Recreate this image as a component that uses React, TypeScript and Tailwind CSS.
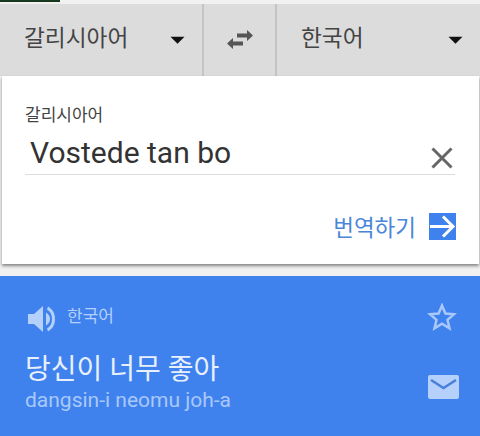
const font = { fontFamily: '"Roboto", "Noto Sans CJK KR", sans-serif' };

function Caret() {
  return (
    <svg width="15" height="8" viewBox="0 0 16 8" className="shrink-0">
      <path d="M0.5 0.5h15L8 8z" fill="#111" />
    </svg>
  );
}

function LangButton({ label, className }: { label: string; className: string }) {
  return (
    <div className={`flex items-center justify-between ${className}`}>
      <span className="text-[22.700px] leading-none text-[#444] -mt-[2px]">{label}</span>
      <Caret />
    </div>
  );
}

export default function App() {
  return (
    <div className="w-[480px] h-[436px] overflow-hidden bg-[#f1f1f1] flex flex-col relative" style={font}>
      <div className="absolute left-0 top-0 w-[60px] h-[2px] bg-[#17381f]" />
      <div className="h-[72px] mt-[4px] flex bg-[#dcdcdc] shrink-0">
        <LangButton label="갈리시아어" className="w-[204px] pl-[24px] pr-[17px] border-r-2 border-[#c4c4c4]" />
        <div className="w-[73px] flex items-center justify-center border-r-2 border-[#c4c4c4]">
          <svg width="26" height="21" viewBox="0 0 26 21" fill="#555" className="-mt-[2px]">
            <path d="M10 4.500h10V1l6 5.500-6 5.500V8.500H10z" />
            <path d="M16 12.500H6V9l-6 5.500L6 20v-3.500h10z" />
          </svg>
        </div>
        <LangButton label="한국어" className="flex-1 pl-[24px] pr-[17px]" />
      </div>

      <div className="h-[188px] ml-[2px] mr-[1px] bg-white shadow-[0_2px_3px_rgba(0,0,0,0.45)] flex flex-col pl-[23px] pr-[23px] shrink-0 z-10">
        <div className="text-[17px] leading-none text-[#444] mt-[31px]">갈리시아어</div>
        <div className="flex items-end justify-between h-[51px] pl-[5px] pr-[2px] pb-[6px] mr-[1px] border-b border-[#dddddd]">
          <span className="text-[30px] leading-none text-[#333]">Vostede tan bo</span>
          <svg width="22" height="22" viewBox="0 0 22 22" stroke="#666" strokeWidth="3" className="-mb-[1px]">
            <path d="M1.500 1.500l19 19M20.500 1.500l-19 19" />
          </svg>
        </div>
        <div className="flex items-center justify-end gap-[13px] mt-[38px]">
          <span className="text-[22.500px] leading-none text-[#4a86d8] mt-[3px]">번역하기</span>
          <svg width="27" height="27" viewBox="0 0 27 27" className="shrink-0">
            <rect width="27" height="27" fill="#3f82ee" />
            <path d="M1 13.500h22M14 3.500l10 10-10 10" fill="none" stroke="#fff" strokeWidth="3" />
          </svg>
        </div>
      </div>

      <div className="mt-[12px] flex-1 bg-[#3f82ee] flex flex-col pl-[26px] pr-[23px]">
        <div className="flex items-center justify-between mt-[29px]">
          <div className="flex items-center gap-[11px]">
            <svg width="30" height="28" viewBox="0 0 30 28" fill="#b4d0fb">
              <path d="M2 9h6l9-8v26l-9-8H2z" />
              <path d="M20 7.500c3 2 4 4 4 6.500s-1 4.500-4 6.500z" />
              <path d="M22 1.500c5 3 7 7 7 12.500s-2 9.500-7 12.500l-1-3c3.500-2 5-5 5-9.500s-1.500-7.500-5-9.500z" />
            </svg>
            <span className="text-[17px] leading-none text-[#b4d0fb] -mt-[6px]">한국어</span>
          </div>
          <svg width="30" height="28" viewBox="0 0 30 28" fill="none" stroke="#a9c8fa" strokeWidth="2.500" className="-mt-[2px] mb-[2px]">
            <path d="M15 2.500l3.400 8 8.600.7-6.500 5.700 2 8.400-7.500-4.500-7.500 4.500 2-8.400L3 11.200l8.600-.7z" />
          </svg>
        </div>
        <div className="flex items-end justify-between mt-[21px]">
          <div className="flex flex-col -ml-[1px]">
            <span className="text-[28px] leading-[32px] text-[#e8f0fe]">당신이 너무 좋아</span>
            <span className="text-[21px] leading-[24px] mt-[2px] text-[#a9c8fa]">dangsin-i neomu joh-a</span>
          </div>
          <svg width="31" height="24" viewBox="0 0 31 24" className="mb-[13px] -mr-[2px]">
            <rect width="31" height="24" rx="2" fill="#b4d0fb" />
            <path d="M3 5l12.500 8L28 5" fill="none" stroke="#4a7fdc" strokeWidth="2.500" />
          </svg>
        </div>
      </div>
    </div>
  );
}
